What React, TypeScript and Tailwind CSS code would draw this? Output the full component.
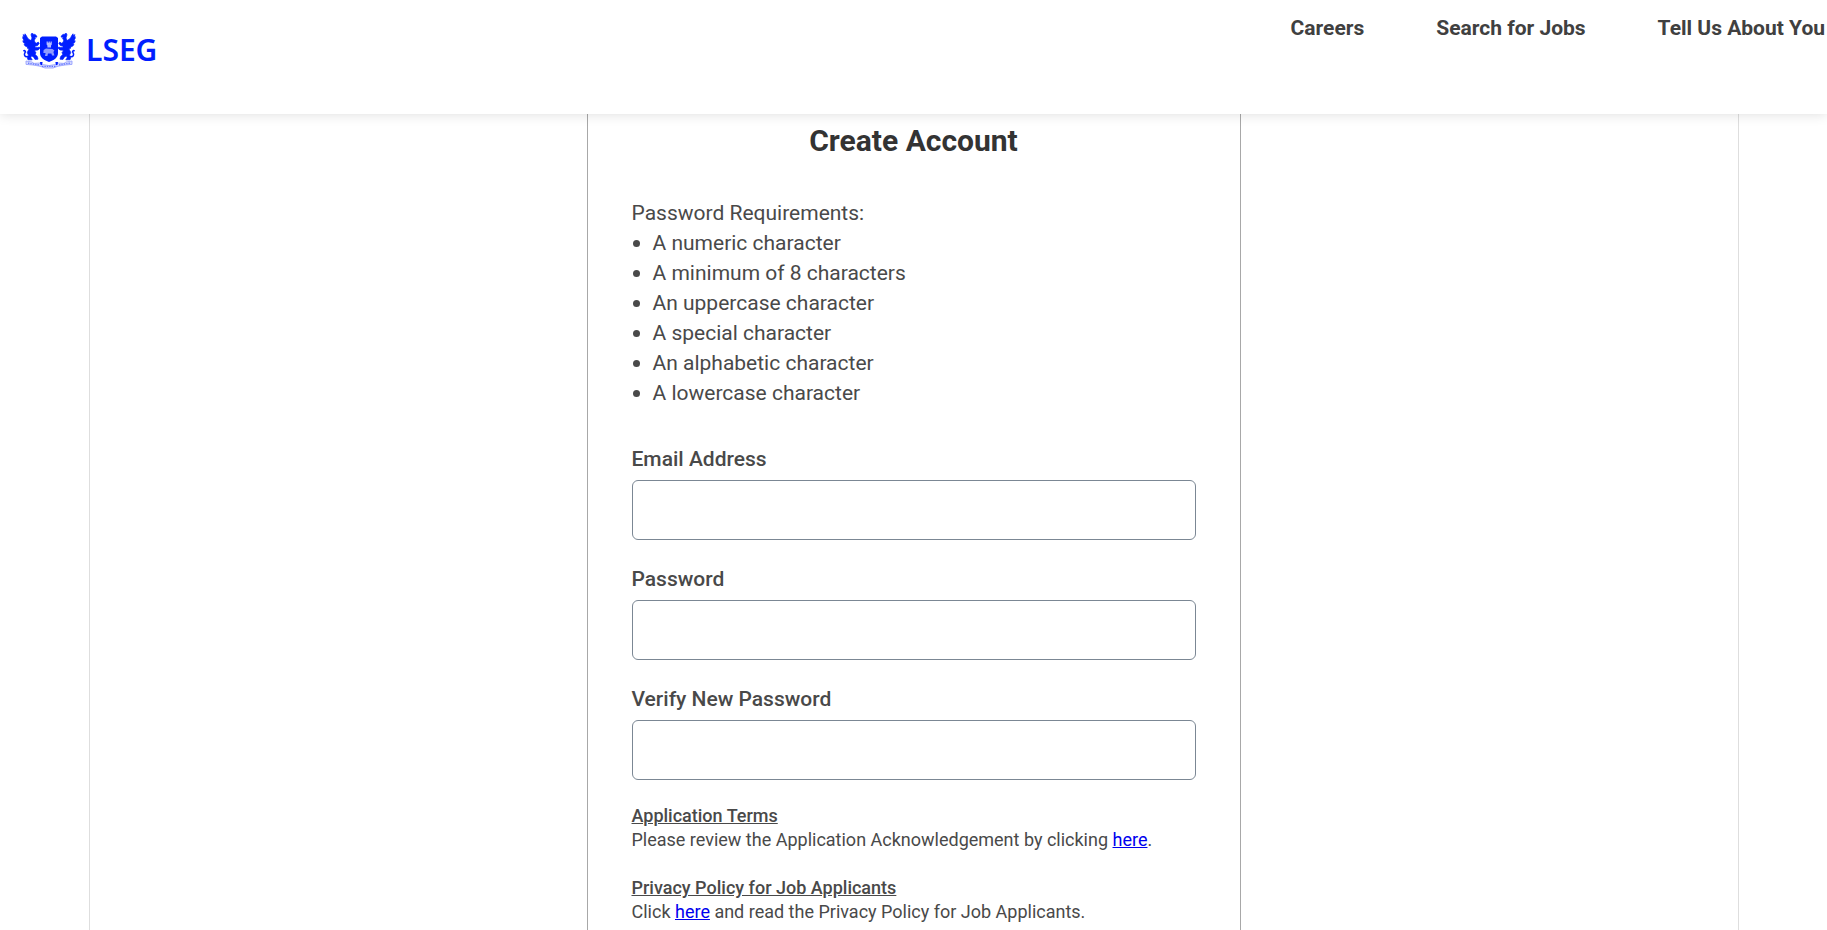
import React from 'react';

const NAV_ITEMS = ['Careers', 'Search for Jobs', 'Tell Us About You'];

const REQUIREMENTS = [
  'A numeric character',
  'A minimum of 8 characters',
  'An uppercase character',
  'A special character',
  'An alphabetic character',
  'A lowercase character',
];

const FIELDS = [
  { id: 'email', label: 'Email Address', type: 'email' },
  { id: 'password', label: 'Password', type: 'password' },
  { id: 'verify-password', label: 'Verify New Password', type: 'password' },
];

function Griffin() {
  return (
    <g stroke="#001eff" strokeWidth="0.7" strokeLinejoin="round">
      {/* wing */}
      <path d="M1 2.6 L2.6 3.6 L3 1.8 L4.4 3.8 L5.4 5.8 L7 7.4 L9 8.6 L10 12 L9.4 16 L7.4 17 L5 16 L5.8 15 L3.4 14.2 L2 12.6 L3.4 12 L1.4 10.6 L0.8 8.8 L2.2 8.6 L0.8 6.4 L0.8 4.6 L2 5 Z" />
      {/* head and neck */}
      <path d="M9 2.8 L10 1 L11 2.2 L13 2.4 L14.8 4 L14.6 5.2 L12.8 5 L13.4 6.8 L12.2 8 L13 10.6 L14.6 11.2 L16.2 10 L17.2 11.4 L15.4 13.8 L13 14 L13 15.6 L15.6 15.6 L17.4 15 L17.8 16.4 L16 18 L13 18.2 L11.6 20 L8.4 19 L7.4 15.6 L8.8 12 L9 8.4 L10 6 Z" />
      {/* haunch, legs and tail */}
      <path d="M7 17 L11.6 18 L14 20.4 L13.2 22.6 L15.4 24.6 L16 27.2 L13 27.4 L11.8 25.2 L9.6 23.8 L8.8 25.8 L10.2 27.8 L6 27.8 L5.4 26.2 L6.4 23 L5.2 20.6 Z" />
      <path d="M6 24.6 C2.6 25.4 1.6 22.6 3 20.6 C4 19.2 2.8 18.2 1.4 19" fill="none" strokeWidth="1.6" />
    </g>
  );
}

function Crest() {
  return (
    <svg viewBox="0 0 54 37" className="h-[37px] w-[54px] shrink-0" fill="#001eff" aria-hidden="true">
      <Griffin />
      <g transform="translate(54 0) scale(-1 1)">
        <Griffin />
      </g>
      <path d="M18 6 L20 4.6 L34 4.6 L36 6 L36 21 C36 26 31.6 28.2 27 30 C22.4 28.2 18 26 18 21 Z" />
      {/* castle and lion on the shield */}
      <path d="M24.6 9.4 h1.2 v1.4 h0.8 V9.4 h1.2 v1.4 h0.8 V9.4 h1.2 v3 l-0.8 1 v2.2 h-3.6 V13.4 l-0.8 -1 Z" fill="#b4bdff" />
      <path d="M21.6 18 L24 16.6 L30.4 17 L32.4 18.6 L31.4 20 L32.4 23.6 L30 23.6 L29.4 21.6 L26 21.6 L25.4 24 L23 24 L23.6 21 L21.4 21 Z" fill="#8f9bff" />
      {/* motto ribbon */}
      <path
        d="M4 29 L10 30 L12 31.4 L18 31 L21 32.6 L27 33.6 L33 32.6 L36 31 L42 31.4 L44 30 L50 29 L50 32.4 L43 33 L36 34.2 L31 36 L23 36 L18 34.2 L11 33 L4 32.4 Z"
        fill="#d5daff"
        stroke="#8f9bff"
        strokeWidth="0.8"
      />
      <path d="M6 31.2 L17 32.8 M20 34.4 L34 34.4 M37 32.8 L48 31.2" fill="none" stroke="#5f72ff" strokeWidth="1.2" strokeDasharray="1.4 1" />
      <path d="M18 30 L20.6 30 L20 33.2 L18.4 32.8 Z M33.4 30 L36 30 L35.6 32.8 L34 33.2 Z" />
    </svg>
  );
}

export default function App() {
  return (
    <div className="flex min-h-screen flex-col bg-white font-['Roboto',sans-serif] text-[#494949]">
      <header className="relative z-10 flex h-[114px] items-start justify-between bg-white shadow-[0_0_12px_rgba(0,0,0,0.14)]">
        <a href="#home" aria-label="LSEG" className="flex items-start gap-2.5 pt-8 pl-[22px]">
          <Crest />
          <span className="font-['Noto_Sans',sans-serif] text-[30px] leading-9 font-semibold text-[#001eff]">LSEG</span>
        </a>
        <nav className="flex gap-[72px] pt-[13px] pr-0.5">
          {NAV_ITEMS.map((item) => (
            <a key={item} href="#nav" className="text-[21px] leading-[30px] font-bold text-[#404040]">
              {item}
            </a>
          ))}
        </nav>
      </header>

      <main className="mx-auto flex w-full max-w-[1650px] grow justify-center border-x border-[#dedede]">
        <section className="w-full max-w-[654px] border-x border-[#a8a8a8] px-11 pt-[9px] pb-1.5">
          <h1 className="text-center text-[30px] leading-9 font-bold text-[#333333]">Create Account</h1>

          <div className="mt-[39px] text-[21px] leading-[30px]">
            <p>Password Requirements:</p>
            <ul>
              {REQUIREMENTS.map((requirement) => (
                <li
                  key={requirement}
                  className="flex items-center gap-[13px] pl-px before:size-[7px] before:rounded-full before:bg-[#494949]"
                >
                  {requirement}
                </li>
              ))}
            </ul>
          </div>

          <form className="mt-9 flex flex-col gap-6">
            {FIELDS.map((field) => (
              <div key={field.id} className="flex flex-col gap-1.5">
                <label htmlFor={field.id} className="text-[21px] leading-[30px] font-medium">
                  {field.label}
                </label>
                <input
                  id={field.id}
                  type={field.type}
                  className="h-[60px] w-full rounded-md border border-[#7b8794] bg-white px-3 text-[21px]"
                />
              </div>
            ))}
          </form>

          <div className="mt-6 flex flex-col gap-6 text-[18px] leading-6">
            <div>
              <h2 className="font-medium underline">Application Terms</h2>
              <p>
                Please review the Application Acknowledgement by clicking{' '}
                <a href="#terms" className="text-[#0000ee] underline">here</a>.
              </p>
            </div>
            <div>
              <h2 className="font-medium underline">Privacy Policy for Job Applicants</h2>
              <p>
                Click <a href="#privacy" className="text-[#0000ee] underline">here</a> and read the Privacy Policy for Job
                Applicants.
              </p>
            </div>
          </div>
        </section>
      </main>
    </div>
  );
}
